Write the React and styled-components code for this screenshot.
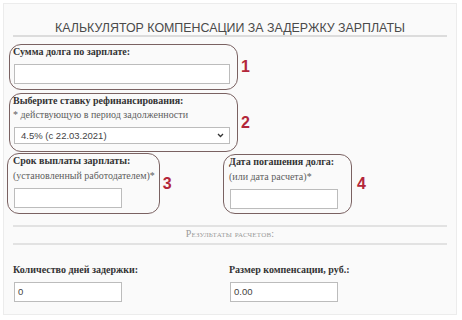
import React from 'react';
import styled, { createGlobalStyle } from 'styled-components';

const GlobalStyle = createGlobalStyle`
    html, body {
        margin: 0;
        padding: 0;
        background: #ffffff;
    }
    body {
        width: 462px;
        height: 320px;
        overflow: hidden;
        font-family: "Liberation Serif", "DejaVu Serif", serif;
    }
`;

const Card = styled.div`
    margin: 3px 5px 0 3px;
    height: 312px;
    box-sizing: border-box;
    border: 1px solid #ececec;
    background: #fafafa;
`;

const Title = styled.h1`
    margin: 0 9px;
    padding-top: 17px;
    font-family: "Liberation Sans", Arial, sans-serif;
    font-weight: normal;
    font-size: 12.4px;
    line-height: 14px;
    color: #4a4a4a;
    text-align: center;
    border-bottom: 2px solid #dcdcdc;
    padding-bottom: 0;
`;

const Form = styled.div`
    padding: 7px 0 0 5px;
    display: flex;
    flex-direction: column;
    gap: 3px;
`;

const Row = styled.div`
    display: flex;
    align-items: center;
`;

const Marked = styled.div`
    border: 1.1px solid #7a6262;
    border-radius: 12px;
    padding: ${p => p.$pad || '1px 7px 5px 3px'};
    display: flex;
    flex-direction: column;
`;

const Num = styled.span`
    font-family: "Liberation Sans", Arial, sans-serif;
    font-weight: bold;
    font-size: 16px;
    color: #b3263a;
    margin-left: ${p => p.$gap || '3px'};
`;

const Label = styled.div`
    font-weight: bold;
    font-size: 10px;
    line-height: 12px;
    color: #333;
`;

const Hint = styled.div`
    margin-top: ${p => p.$top || '2px'};
    font-size: 10px;
    line-height: 12px;
    color: #5e5e5e;
`;

const Input = styled.div`
    margin-top: 6px;
    margin-left: 1px;
    width: ${p => p.$w || '216px'};
    height: 20px;
    box-sizing: border-box;
    border: 1px solid #bcbcbc;
    background: #fff;
    font-family: "Liberation Sans", Arial, sans-serif;
    font-size: 9.5px;
    line-height: 18px;
    padding-left: 3px;
    color: #444;
`;

const Select = styled.div`
    margin-top: 6px;
    margin-left: 1px;
    width: 216px;
    height: 17px;
    box-sizing: border-box;
    border: 1px solid #bcbcbc;
    background: #fff;
    display: flex;
    align-items: center;
    justify-content: space-between;
    padding: 0 5px 0 6px;
    font-family: "Liberation Sans", Arial, sans-serif;
    font-size: 9.5px;
    color: #444;
`;

const Pair = styled.div`
    display: grid;
    grid-template-columns: 216px 216px;
    padding-left: 3px;
    margin-top: 1px;
`;

const Divider = styled.div`
    margin: 11px 9px 0 9px;
    border-top: 2px solid #e2e2e2;
    border-bottom: 2px solid #e2e2e2;
    padding: 2px 0 4px;
    text-align: center;
    font-size: 10px;
    line-height: 10px;
    font-variant: small-caps;
    color: #9a9a9a;
    letter-spacing: 0.2px;
`;

const Results = styled.div`
    display: grid;
    grid-template-columns: 216px 216px;
    padding: 19px 0 0 9px;
`;

const Field = styled.div`
    display: flex;
    flex-direction: column;
`;

function Chevron() {
    return (
        <svg width="7" height="5" viewBox="0 0 7 5">
            <path d="M1 1l2.5 2.5L6 1" fill="none" stroke="#333" strokeWidth="1.3" />
        </svg>
    );
}

export default function App() {
    return (
        <>
            <GlobalStyle />
            <Card>
                <Title>КАЛЬКУЛЯТОР КОМПЕНСАЦИИ ЗА ЗАДЕРЖКУ ЗАРПЛАТЫ</Title>
                <Form>
                    <Row>
                        <Marked>
                            <Label>Сумма долга по зарплате:</Label>
                            <Input />
                        </Marked>
                        <Num>1</Num>
                    </Row>
                    <Row>
                        <Marked $pad="1px 7px 7px 3px">
                            <Label>Выберите ставку рефинансирования:</Label>
                            <Hint>* действующую в период задолженности</Hint>
                            <Select>
                                <span>4.5% (с 22.03.2021)</span>
                                <Chevron />
                            </Select>
                        </Marked>
                        <Num>2</Num>
                    </Row>
                </Form>
                <Pair>
                    <Row>
                        <Marked $pad="1px 4px 5px 5px">
                            <Label>Срок выплаты зарплаты:</Label>
                            <Hint $top="3px">(установленный работодателем)*</Hint>
                            <Input $w="108px" />
                        </Marked>
                        <Num>3</Num>
                    </Row>
                    <Row>
                        <Marked $pad="1px 13px 4px 5px">
                            <Label>Дата погашения долга:</Label>
                            <Hint $top="3px">(или дата расчета)*</Hint>
                            <Input $w="108px" />
                        </Marked>
                        <Num $gap="5px">4</Num>
                    </Row>
                </Pair>
                <Divider>Результаты расчетов:</Divider>
                <Results>
                    <Field>
                        <Label>Количество дней задержки:</Label>
                        <Input $w="108px">0</Input>
                    </Field>
                    <Field>
                        <Label>Размер компенсации, руб.:</Label>
                        <Input $w="108px">0.00</Input>
                    </Field>
                </Results>
            </Card>
        </>
    );
}
